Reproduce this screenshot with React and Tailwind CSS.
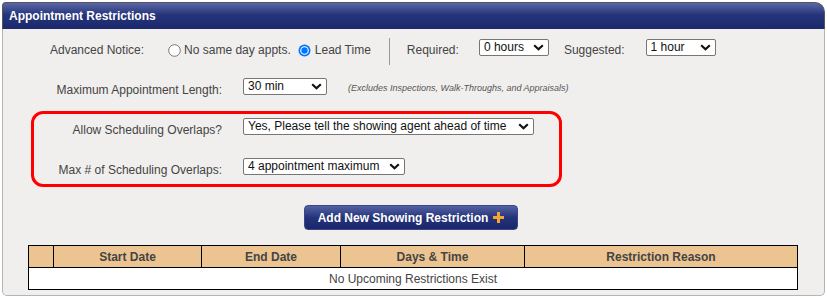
import React from 'react';

function Chevron() {
  return (
    <svg width="11" height="7" viewBox="0 0 11 7" className="shrink-0">
      <polyline points="1.2,1.2 5.5,5.2 9.8,1.2" fill="none" stroke="#111" strokeWidth="2.2" />
    </svg>
  );
}

function Select({ value, w }) {
  return (
    <div className={`${w} h-[17px] bg-white border border-[#767676] rounded-[2px] flex items-center justify-between pl-[4px] pr-[4px] text-[12px] leading-[15px] text-[#111]`}>
      <span className="whitespace-nowrap">{value}</span>
      <Chevron />
    </div>
  );
}

function Radio({ checked }) {
  return (
    <svg width="13" height="13" viewBox="0 0 13 13" className="shrink-0">
      {checked ? (
        <>
          <circle cx="6.5" cy="6.5" r="6" fill="#0075ff" />
          <circle cx="6.5" cy="6.5" r="4.3" fill="#fff" />
          <circle cx="6.5" cy="6.5" r="3.2" fill="#0075ff" />
        </>
      ) : (
        <circle cx="6.5" cy="6.5" r="5.8" fill="#fff" stroke="#767676" strokeWidth="1" />
      )}
    </svg>
  );
}

export default function App() {
  return (
    <div className="w-[827px] h-[298px] bg-white pt-[2px] pl-[2px] font-['Liberation_Sans',Arial,sans-serif] text-[12px] text-[#444]">
      <div className="w-[823px] h-[294px] flex flex-col">
        <div className="h-[27px] shrink-0 rounded-tl-[4px] rounded-tr-[10px] border-t border-r border-l border-[#555] bg-[linear-gradient(#5a68a8,#26347a_45%,#1b286c)] flex items-center pl-[6px]">
          <span className="text-white font-bold text-[12px]">Appointment Restrictions</span>
        </div>
        <div className="flex-1 bg-[#f0efee] border-l border-r border-b border-[#b4b4b4] rounded-b-[5px]">
          {/* Advanced notice row */}
          <div className="mt-[9px] h-[27px] flex items-start">
            <span className="ml-[47px] pt-[4px] leading-[16px]">Advanced Notice:</span>
            <div className="ml-[24px] mt-[6px]"><Radio /></div>
            <span className="ml-[3px] pt-[4px] leading-[16px]">No same day appts.</span>
            <div className="ml-[7px] mt-[6px]"><Radio checked /></div>
            <span className="ml-[4px] pt-[4px] leading-[16px]">Lead Time</span>
            <div className="ml-[18px] w-px h-[27px] bg-[#999]" />
            <span className="ml-[17px] pt-[4px] leading-[16px]">Required:</span>
            <div className="ml-[20px] mt-[1px]"><Select value="0 hours" w="w-[70px]" /></div>
            <span className="ml-[15px] pt-[4px] leading-[16px]">Suggested:</span>
            <div className="ml-[21px] mt-[1px]"><Select value="1 hour" w="w-[70px]" /></div>
          </div>

          {/* Max length row */}
          <div className="mt-[13px] flex items-start">
            <span className="w-[219px] text-right pt-[4px] leading-[16px]">Maximum Appointment Length:</span>
            <div className="ml-[21px]"><Select value="30 min" w="w-[84px]" /></div>
            <span className="ml-[21px] pt-[4px] leading-[12px] text-[9px] italic text-[#555]">(Excludes Inspections, Walk-Throughs, and Appraisals)</span>
          </div>

          {/* Overlaps */}
          <div className="mt-[13px] ml-[28px] w-[531px] h-[76px] border-[3px] border-[#ff0000] rounded-[12px] pt-[4px]">
            <div className="flex items-start">
              <span className="w-[188px] text-right pt-[4px] leading-[16px]">Allow Scheduling Overlaps?</span>
              <div className="ml-[21px]"><Select value="Yes, Please tell the showing agent ahead of time" w="w-[291px]" /></div>
            </div>
            <div className="mt-[20px] flex items-start">
              <span className="w-[188px] text-right pt-[4px] leading-[16px]">Max # of Scheduling Overlaps:</span>
              <div className="ml-[21px]"><Select value="4 appointment maximum" w="w-[162px]" /></div>
            </div>
          </div>

          {/* Button */}
          <div className="mt-[18px] ml-[301px] w-[214px] h-[25px] rounded-[4px] border border-[#3b4686] bg-[linear-gradient(#5462a4,#25337a_50%,#1a276b)] flex items-center justify-center gap-[5px] text-white font-bold text-[12px]">
            <span>Add New Showing Restriction</span>
            <svg width="11" height="11" viewBox="0 0 11 11">
              <rect x="4" y="0" width="3" height="11" fill="#f7a234" />
              <rect x="0" y="4" width="11" height="3" fill="#f7a234" />
            </svg>
          </div>

          {/* Table */}
          <table className="mt-[15px] ml-[25px] w-[770px] table-fixed border-collapse text-[12px]">
            <colgroup>
              <col className="w-[25px]" />
              <col className="w-[148px]" />
              <col className="w-[139px]" />
              <col className="w-[184px]" />
              <col />
            </colgroup>
            <thead>
              <tr className="bg-[#ecc491] h-[22px]">
                <th className="border border-black"></th>
                <th className="border border-black font-bold text-[#444]">Start Date</th>
                <th className="border border-black font-bold text-[#444]">End Date</th>
                <th className="border border-black font-bold text-[#444]">Days &amp; Time</th>
                <th className="border border-black font-bold text-[#444]">Restriction Reason</th>
              </tr>
            </thead>
            <tbody>
              <tr className="bg-white h-[22px]">
                <td colSpan={5} className="border border-black text-center">No Upcoming Restrictions Exist</td>
              </tr>
            </tbody>
          </table>
        </div>
      </div>
    </div>
  );
}
